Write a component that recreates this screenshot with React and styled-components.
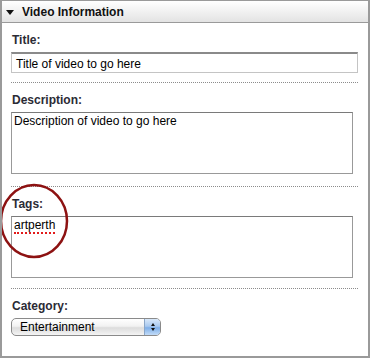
import styled, { createGlobalStyle } from 'styled-components';

const GlobalStyle = createGlobalStyle`
  body {
    margin: 0;
    background: #fff;
    font-family: "Liberation Sans", Arial, sans-serif;
  }
`

const Panel = styled.div`
  position: relative;
  width: 370px;
  height: 358px;
  box-sizing: border-box;
  border: 2px solid #9a9a9a;
  border-top-width: 1px;
  background: #fff;
  overflow: hidden;
`

const Header = styled.div`
  height: 21px;
  display: flex;
  align-items: center;
  gap: 8px;
  padding-left: 4px;
  border-bottom: 1px solid #9a9a9a;
  background: linear-gradient(#ffffff, #e3e3e3);
  font-size: 12px;
  font-weight: bold;
  color: #111;
`

const Arrow = styled.span`
  width: 0;
  height: 0;
  margin-top: 2px;
  border-left: 4px solid transparent;
  border-right: 4px solid transparent;
  border-top: 5px solid #111;
`

const Body = styled.div`
  padding: 0 10px 0 8px;
`

const Section = styled.section`
  padding: 10px 0 ${props => props.$bottom || 10}px;
  border-bottom: ${props => props.$last ? 'none' : '1px dotted #8c8c8c'};
  margin-left: 1px;
`

const Label = styled.div`
  height: 15px;
  line-height: 15px;
  margin: 0 0 4px 1px;
  font-size: 12px;
  font-weight: bold;
  color: #2b2b35;
`

const Field = styled.div`
  height: 21px;
  box-sizing: border-box;
  padding: 3px 4px;
  border: 1px solid #c4c4c4;
  border-top: 2px solid #8a8a8a;
  font-size: 12px;
  line-height: 14px;
  color: #000;
`

const TextBox = styled.div`
  width: 342px;
  height: 62px;
  box-sizing: border-box;
  padding: 1px 2px;
  border: 1px solid #999;
  border-top-color: #7a7a7a;
  font-size: 12px;
  line-height: 14px;
  color: #000;
`

const Misspelt = styled.span`
  border-bottom: 2px dotted #e21b1b;
`

const Select = styled.div`
  width: 150px;
  height: 18px;
  box-sizing: border-box;
  display: flex;
  align-items: stretch;
  border: 1px solid #8a8a8a;
  border-radius: 5px;
  overflow: hidden;
  background: linear-gradient(#ffffff 0%, #f2f2f2 45%, #dcdcdc 55%, #f4f4f4 100%);
  font-size: 12px;
  color: #000;
`

const SelectText = styled.span`
  flex: 1;
  padding-left: 8px;
  line-height: 16px;
`

const Stepper = styled.span`
  width: 15px;
  display: flex;
  flex-direction: column;
  align-items: center;
  justify-content: center;
  gap: 2px;
  border-left: 1px solid #8aa6c8;
  background: linear-gradient(#d8e8fa 0%, #a9c9ef 45%, #7eaee8 55%, #c2dcf8 100%);
`

const Tip = styled.span`
  width: 0;
  height: 0;
  border-left: 2.5px solid transparent;
  border-right: 2.5px solid transparent;
  ${props => props.$up
    ? 'border-bottom: 3px solid #111;'
    : 'border-top: 3px solid #111;'}
`

const Circle = styled.svg`
  position: absolute;
  left: -2px;
  top: -1px;
  pointer-events: none;
`

const App = () => {
  return (
    <>
      <GlobalStyle />
      <Panel>
        <Header>
          <Arrow />
          Video Information
        </Header>
        <Body>
          <Section $bottom={9}>
            <Label>Title:</Label>
            <Field>Title of video to go here</Field>
          </Section>
          <Section $bottom={12}>
            <Label>Description:</Label>
            <TextBox>Description of video to go here</TextBox>
          </Section>
          <Section $bottom={10}>
            <Label>Tags:</Label>
            <TextBox>
              <Misspelt>artperth</Misspelt>
            </TextBox>
          </Section>
          <Section $last>
            <Label>Category:</Label>
            <Select>
              <SelectText>Entertainment</SelectText>
              <Stepper>
                <Tip $up />
                <Tip />
              </Stepper>
            </Select>
          </Section>
        </Body>
        <Circle width="80" height="270" viewBox="0 0 80 270">
          <ellipse cx="34" cy="221" rx="33" ry="36" fill="none" stroke="#8d1212" strokeWidth="2.5" />
        </Circle>
      </Panel>
    </>
  );
};

export default App;
